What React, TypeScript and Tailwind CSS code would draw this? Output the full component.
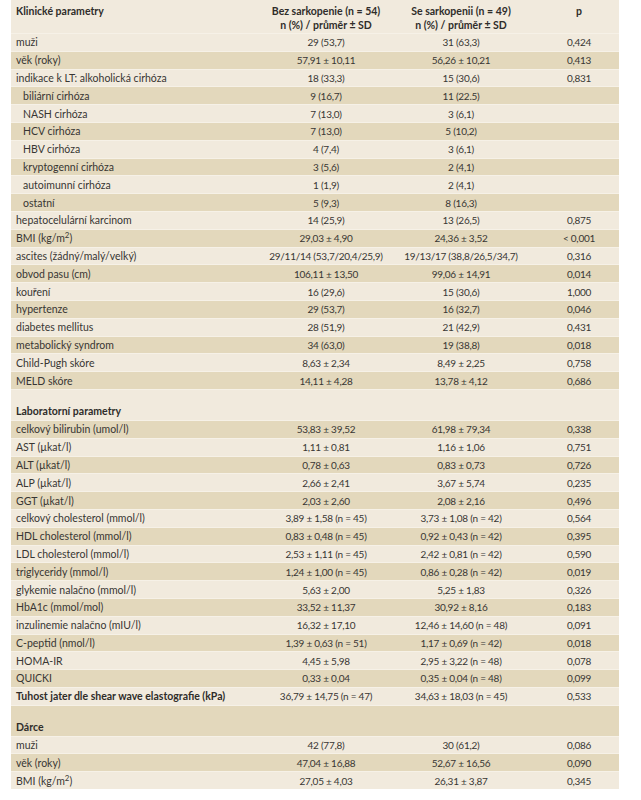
import { ReactNode } from "react";

type Row = {
  label: ReactNode;
  a?: string;
  b?: string;
  p?: string;
  indent?: boolean;
  bold?: boolean;
  section?: boolean;
};

const bmi = (
  <>
    BMI (kg/m<sup>2</sup>)
  </>
);

const rows: Row[] = [
  { label: "muži", a: "29 (53,7)", b: "31 (63,3)", p: "0,424" },
  { label: "věk (roky)", a: "57,91 ± 10,11", b: "56,26 ± 10,21", p: "0,413" },
  { label: "indikace k LT: alkoholická cirhóza", a: "18 (33,3)", b: "15 (30,6)", p: "0,831" },
  { label: "biliární cirhóza", a: "9 (16,7)", b: "11 (22.5)", indent: true },
  { label: "NASH cirhóza", a: "7 (13,0)", b: "3 (6,1)", indent: true },
  { label: "HCV cirhóza", a: "7 (13,0)", b: "5 (10,2)", indent: true },
  { label: "HBV cirhóza", a: "4 (7,4)", b: "3 (6,1)", indent: true },
  { label: "kryptogenní cirhóza", a: "3 (5,6)", b: "2 (4,1)", indent: true },
  { label: "autoimunní cirhóza", a: "1 (1,9)", b: "2 (4,1)", indent: true },
  { label: "ostatní", a: "5 (9,3)", b: "8 (16,3)", indent: true },
  { label: "hepatocelulární karcinom", a: "14 (25,9)", b: "13 (26,5)", p: "0,875" },
  { label: bmi, a: "29,03 ± 4,90", b: "24,36 ± 3,52", p: "< 0,001" },
  { label: "ascites (žádný/malý/velký)", a: "29/11/14 (53,7/20,4/25,9)", b: "19/13/17 (38,8/26,5/34,7)", p: "0,316" },
  { label: "obvod pasu (cm)", a: "106,11 ± 13,50", b: "99,06 ± 14,91", p: "0,014" },
  { label: "kouření", a: "16 (29,6)", b: "15 (30,6)", p: "1,000" },
  { label: "hypertenze", a: "29 (53,7)", b: "16 (32,7)", p: "0,046" },
  { label: "diabetes mellitus", a: "28 (51,9)", b: "21 (42,9)", p: "0,431" },
  { label: "metabolický syndrom", a: "34 (63,0)", b: "19 (38,8)", p: "0,018" },
  { label: "Child-Pugh skóre", a: "8,63 ± 2,34", b: "8,49 ± 2,25", p: "0,758" },
  { label: "MELD skóre", a: "14,11 ± 4,28", b: "13,78 ± 4,12", p: "0,686" },
  { label: "Laboratorní parametry", section: true },
  { label: "celkový bilirubin (umol/l)", a: "53,83 ± 39,52", b: "61,98 ± 79,34", p: "0,338" },
  { label: "AST (µkat/l)", a: "1,11 ± 0,81", b: "1,16 ± 1,06", p: "0,751" },
  { label: "ALT (µkat/l)", a: "0,78 ± 0,63", b: "0,83 ± 0,73", p: "0,726" },
  { label: "ALP (µkat/l)", a: "2,66 ± 2,41", b: "3,67 ± 5,74", p: "0,235" },
  { label: "GGT (µkat/l)", a: "2,03 ± 2,60", b: "2,08 ± 2,16", p: "0,496" },
  { label: "celkový cholesterol (mmol/l)", a: "3,89 ± 1,58 (n = 45)", b: "3,73 ± 1,08 (n = 42)", p: "0,564" },
  { label: "HDL cholesterol (mmol/l)", a: "0,83 ± 0,48 (n = 45)", b: "0,92 ± 0,43 (n = 42)", p: "0,395" },
  { label: "LDL cholesterol (mmol/l)", a: "2,53 ± 1,11 (n = 45)", b: "2,42 ± 0,81 (n = 42)", p: "0,590" },
  { label: "triglyceridy (mmol/l)", a: "1,24 ± 1,00 (n = 45)", b: "0,86 ± 0,28 (n = 42)", p: "0,019" },
  { label: "glykemie nalačno (mmol/l)", a: "5,63 ± 2,00", b: "5,25 ± 1,83", p: "0,326" },
  { label: "HbA1c (mmol/mol)", a: "33,52 ± 11,37", b: "30,92 ± 8,16", p: "0,183" },
  { label: "inzulinemie nalačno (mIU/l)", a: "16,32 ± 17,10", b: "12,46 ± 14,60 (n = 48)", p: "0,091" },
  { label: "C-peptid (nmol/l)", a: "1,39 ± 0,63 (n = 51)", b: "1,17 ± 0,69 (n = 42)", p: "0,018" },
  { label: "HOMA-IR", a: "4,45 ± 5,98", b: "2,95 ± 3,22 (n = 48)", p: "0,078" },
  { label: "QUICKI", a: "0,33 ± 0,04", b: "0,35 ± 0,04 (n = 48)", p: "0,099" },
  { label: "Tuhost jater dle shear wave elastografie (kPa)", a: "36,79 ± 14,75 (n = 47)", b: "34,63 ± 18,03 (n = 45)", p: "0,533", bold: true },
  { label: "Dárce", section: true },
  { label: "muži", a: "42 (77,8)", b: "30 (61,2)", p: "0,086" },
  { label: "věk (roky)", a: "47,04 ± 16,88", b: "52,67 ± 16,56", p: "0,090" },
  { label: bmi, a: "27,05 ± 4,03", b: "26,31 ± 3,87", p: "0,345" },
];

const cols = "grid grid-cols-[258px_114px_156px_80px]";
const num = "text-center text-[10px] tracking-[-0.25px]";

function TableRow({ row, dark }: { row: Row; dark: boolean }) {
  const bg = dark ? "bg-[#e3d8bc]" : "bg-[#f1eadd]";
  if (row.section) {
    return (
      <div className={`${cols} ${bg} h-[31px] items-end border-t border-[#f6f1e7]`}>
        <div className="pl-[5px] pb-[3px] font-bold text-[#2f2d2a]">{row.label}</div>
      </div>
    );
  }
  return (
    <div className={`${cols} ${bg} h-[17.8px] items-center border-t border-[#f6f1e7] whitespace-nowrap`}>
      <div className={`${row.indent ? "pl-[12px]" : "pl-[5px]"} ${row.bold ? "font-bold text-[#2f2d2a]" : ""}`}>
        {row.label}
      </div>
      <div className={num}>{row.a}</div>
      <div className={num}>{row.b}</div>
      <div className={num}>{row.p}</div>
    </div>
  );
}

export default function App() {
  return (
    <div className="w-[641px] h-[800px] bg-white pl-[11px] font-['Lato',sans-serif] text-[10.5px] leading-[12px] text-[#383633]">
      <div className="w-[608px]">
        {/* hlavička tabulky */}
        <div className={`${cols} bg-[#f1eadd] h-[33px] pt-[4px] font-bold text-[#2f2d2a] leading-[14px]`}>
          <div className="pl-[5px]">Klinické parametry</div>
          <div className="text-center whitespace-nowrap">
            Bez sarkopenie (n = 54)
            <br />n (%) / průměr ± SD
          </div>
          <div className="text-center whitespace-nowrap">
            Se sarkopenii (n = 49)
            <br />n (%) / průměr ± SD
          </div>
          <div className="text-center">p</div>
        </div>
        {rows.map((r, i) => (
          <TableRow key={i} row={r} dark={i % 2 === 1} />
        ))}
      </div>
    </div>
  );
}
